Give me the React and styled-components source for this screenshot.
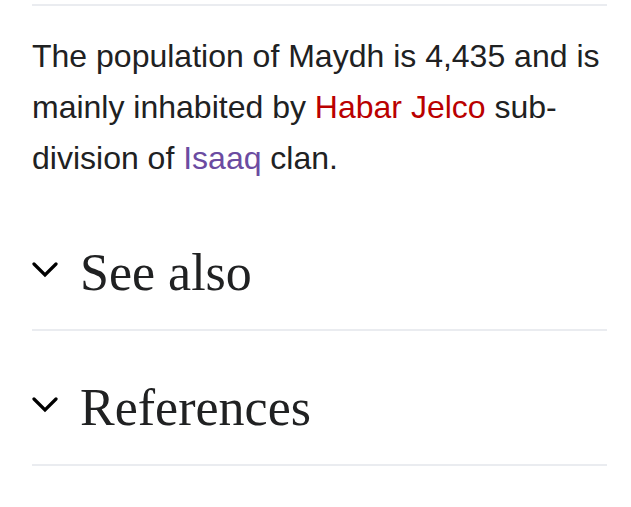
import React from 'react';
import styled, { createGlobalStyle } from 'styled-components';

const GlobalStyle = createGlobalStyle`
  body {
    margin: 0;
    background: #ffffff;
    font-family: "Liberation Sans", Arial, sans-serif;
    color: #202122;
  }
`;

const StPage = styled.div`
  width: 631px;
  padding: 0 24px 0 32px;
  box-sizing: border-box;
`;

const StTopRule = styled.div`
  height: 4px;
  border-bottom: 2px solid #eaecf0;
`;

const StParagraph = styled.p`
  margin: 25px 0 12px;
  font-size: 32px;
  line-height: 51.2px;
`;

const StLink = styled.a`
  color: ${(props) => (props.$isNew ? '#ba0000' : '#6b4ba1')};
  text-decoration: none;
`;

const StSection = styled.div`
  display: flex;
  align-items: flex-start;
  padding: 46px 0 26px;
  border-bottom: 2px solid #eaecf0;

  & + & {
    padding-top: 47px;
  }
`;

const StChevron = styled.svg`
  width: 26px;
  height: 16px;
  margin-top: 19px;
  margin-right: 22px;
  flex-shrink: 0;
`;

const StHeading = styled.h2`
  margin: 0;
  font-family: "Liberation Serif", "Times New Roman", serif;
  font-weight: normal;
  font-size: 52px;
  line-height: 60px;
  color: #202122;
`;

const Chevron = () => (
  <StChevron viewBox="0 0 26 16">
    <polyline points="2,2 13,13 24,2" fill="none" stroke="#000" strokeWidth="3.2" strokeLinecap="round" strokeLinejoin="miter" />
  </StChevron>
);

const App = () => {
  const sections = ['See also', 'References'];

  return (
    <StPage>
      <GlobalStyle />
      <StTopRule />
      <StParagraph>
        The population of Maydh is 4,435 and is mainly inhabited by <StLink $isNew>Habar Jelco</StLink> sub-division of{' '}
        <StLink>Isaaq</StLink> clan.
      </StParagraph>
      {sections.map((title) => (
        <StSection key={title}>
          <Chevron />
          <StHeading>{title}</StHeading>
        </StSection>
      ))}
    </StPage>
  );
};

export default App;
